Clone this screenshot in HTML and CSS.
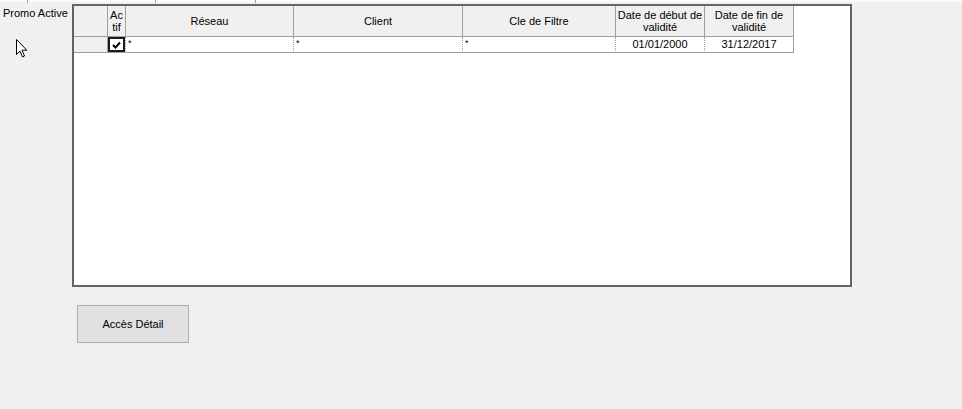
FILE: index.html
```html
<!DOCTYPE html>
<html lang="fr">
<head>
<meta charset="utf-8">
<title>Promo Active</title>
<link rel="stylesheet" href="styles.css">
</head>
<body>
<div class="topstrip"><span class="tick t1"></span><span class="tick t2"></span><span class="tick t3"></span></div>
<div class="form">
  <div class="side">
    <div class="label">Promo Active</div>
    <svg class="cursor" width="13" height="21" viewBox="0 0 13 21">
      <path d="M1.5 1.5 L1.5 16.5 L5 13 L7.5 19 L9.5 18 L7 12.2 L11.8 12.2 Z" fill="#fff" stroke="#000" stroke-width="1" stroke-linejoin="miter"/>
    </svg>
  </div>
  <div class="main">
    <div class="gridbox">
      <div class="grid">
        <div class="hd rowhd"></div>
        <div class="hd">Ac<br>tif</div>
        <div class="hd">Réseau</div>
        <div class="hd">Client</div>
        <div class="hd">Cle de Filtre</div>
        <div class="hd">Date de début de<br>validité</div>
        <div class="hd">Date de fin de<br>validité</div>

        <div class="cell rowhd"></div>
        <div class="cell chk"><span class="box"><svg width="9" height="8" viewBox="0 0 9 8"><path d="M1 4 L3.5 6.5 L8 1.5" fill="none" stroke="#000" stroke-width="2"/></svg></span></div>
        <div class="cell txt dot">*</div>
        <div class="cell txt dot">*</div>
        <div class="cell txt dot">*</div>
        <div class="cell ctr dot">01/01/2000</div>
        <div class="cell ctr">31/12/2017</div>
      </div>
    </div>
    <button class="btn">Accès Détail</button>
  </div>
</div>
</body>
</html>
```
FILE: styles.css
```css
html, body {
  margin: 0;
  padding: 0;
  background: #f0f0f0;
  font-family: "Liberation Sans", Arial, sans-serif;
  font-size: 11px;
  color: #000;
}
body {
  width: 962px;
  height: 409px;
  overflow: hidden;
  position: relative;
}
.topstrip {
  position: absolute;
  left: 0;
  top: 0;
  width: 962px;
  height: 2px;
  background: #fbfbfb;
}
.tick {
  position: absolute;
  top: 0;
  width: 1px;
  height: 3px;
  background: #a0a0a0;
}
.t1 { left: 27px; }
.t2 { left: 155px; }
.t3 { left: 255px; }
.form {
  display: flex;
  padding-top: 4px;
}
.side {
  width: 72px;
  display: flex;
  flex-direction: column;
}
.label {
  padding-left: 3px;
  padding-top: 3px;
  line-height: 13px;
}
.cursor {
  margin-top: 18px;
  margin-left: 15px;
}
.main {
  display: flex;
  flex-direction: column;
  align-items: flex-start;
}
.gridbox {
  width: 780px;
  height: 283px;
  box-sizing: border-box;
  border: 2px solid #646464;
  background: #fff;
}
.grid {
  display: grid;
  grid-template-columns: 34px 18px 168px 169px 153px 89px 89px;
  grid-template-rows: 31px 16px;
}
.hd {
  background: #f0f0f0;
  border-right: 1px solid #a0a0a0;
  border-bottom: 1px solid #a0a0a0;
  box-sizing: border-box;
  display: flex;
  align-items: center;
  justify-content: center;
  text-align: center;
  line-height: 12px;
  white-space: nowrap;
}
.cell {
  box-sizing: border-box;
  border-bottom: 1px solid #a0a0a0;
  border-right: 1px solid #a0a0a0;
  background: #fff;
  line-height: 14px;
  white-space: nowrap;
}
.cell.rowhd {
  background: #f0f0f0;
}
.cell.dot {
  border-right: 1px dotted #a0a0a0;
}
.txt {
  padding-left: 2px;
  font-size: 9px;
  line-height: 12px;
}
.ctr {
  text-align: center;
}
.chk {
  padding: 0 0 0 0;
  border-right: 1px dotted #a0a0a0;
}
.box {
  display: flex;
  align-items: center;
  justify-content: center;
  width: 17px;
  height: 15px;
  box-sizing: border-box;
  border: 2px solid #1a1a1a;
  background: #fff;
}
.btn {
  margin-top: 18px;
  margin-left: 5px;
  width: 112px;
  height: 38px;
  background: #e1e1e1;
  border: 1px solid #adadad;
  font-family: "Liberation Sans", Arial, sans-serif;
  font-size: 11px;
  color: #000;
  padding: 0;
}
```
